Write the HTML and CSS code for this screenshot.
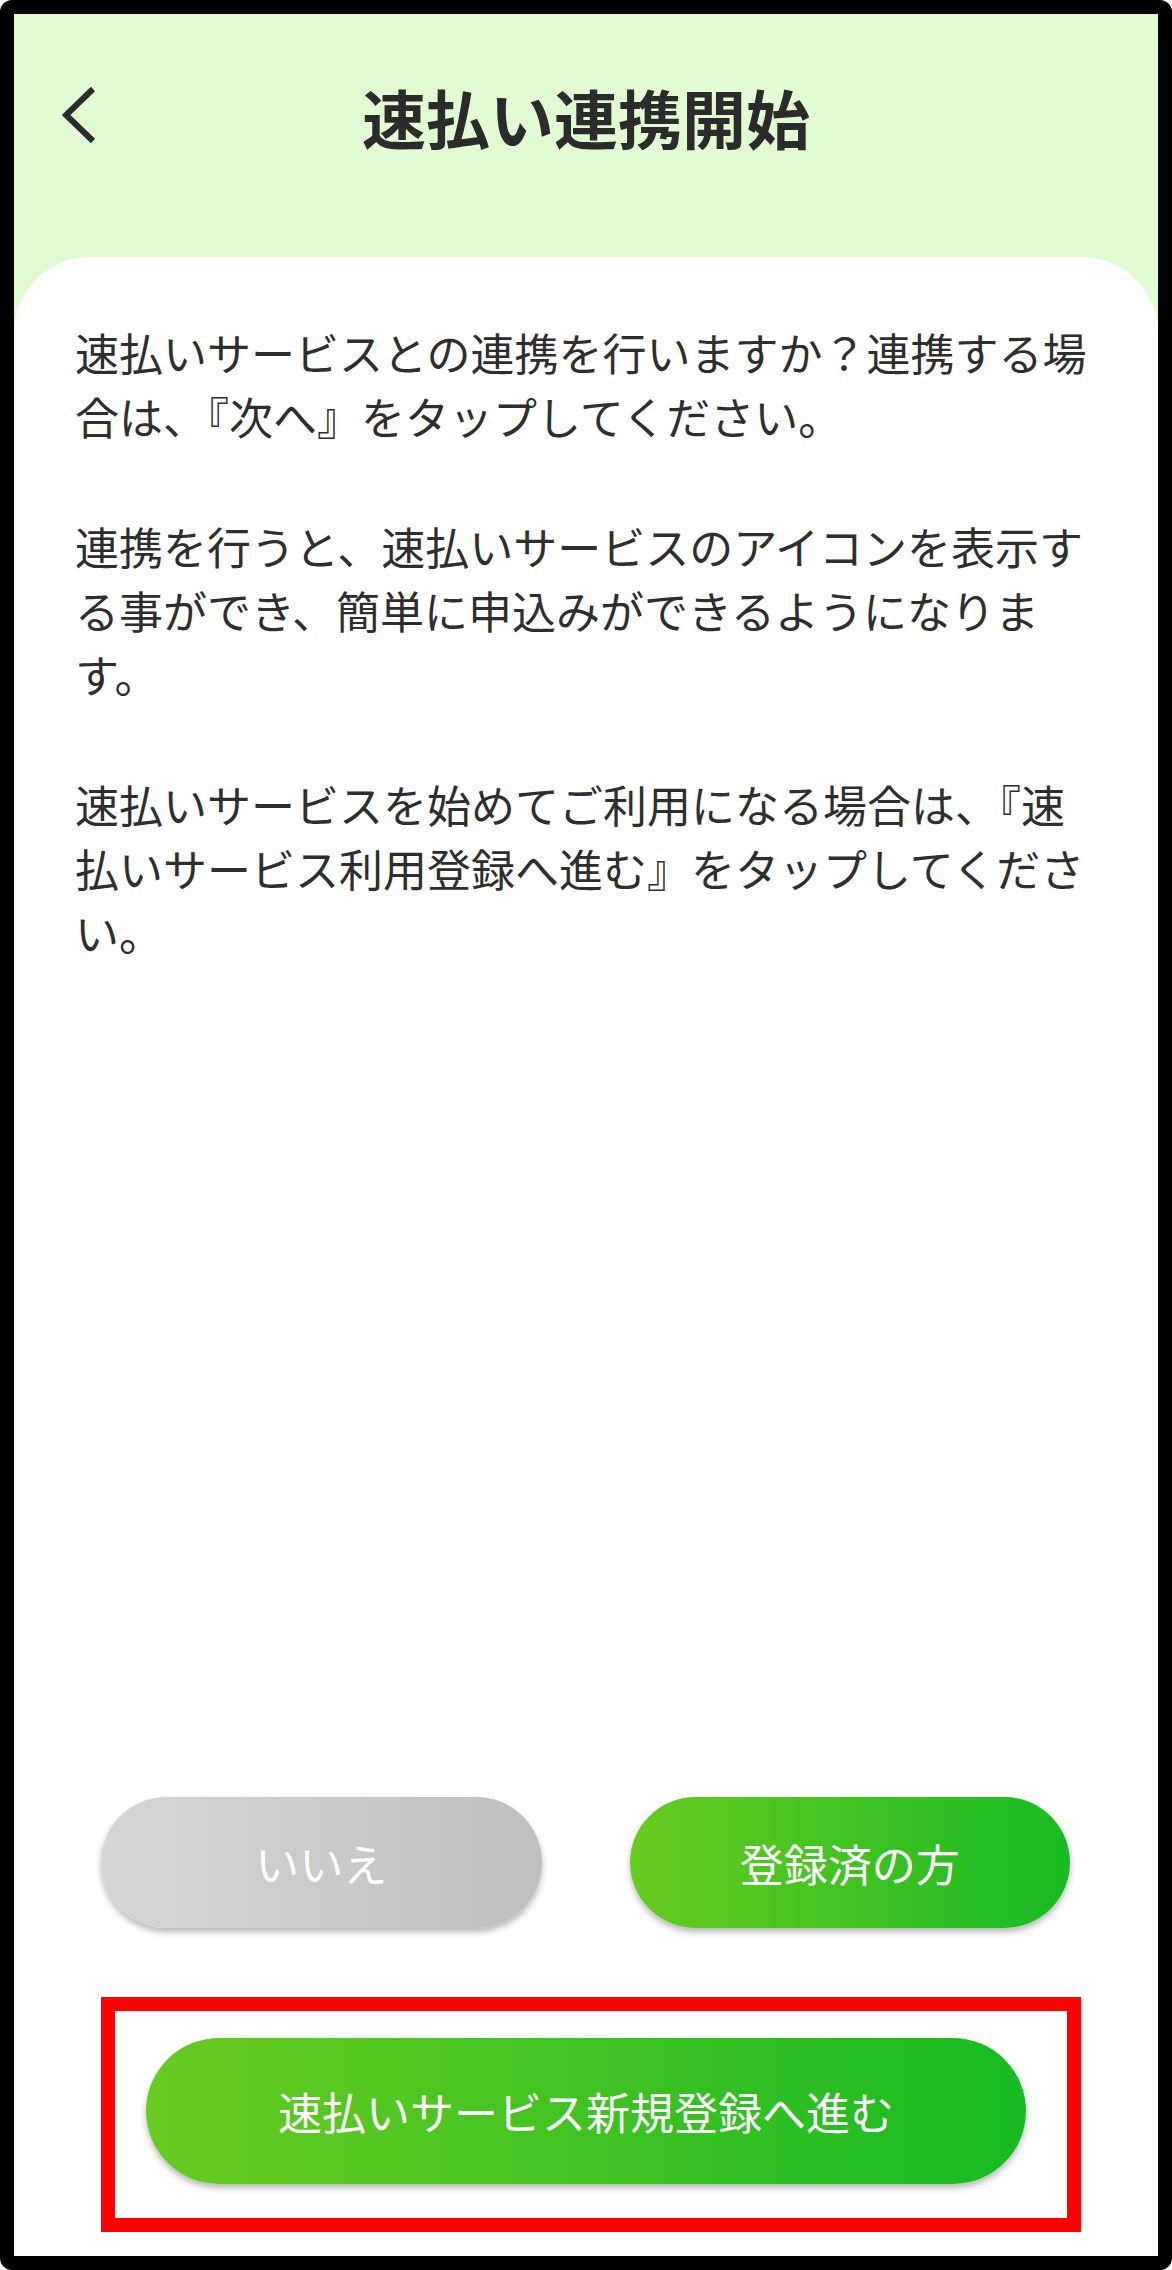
FILE: index.html
```html
<!DOCTYPE html>
<html lang="ja">
<head>
<meta charset="utf-8">
<title>速払い連携開始</title>
<link rel="stylesheet" href="styles.css">
</head>
<body>
<div class="frame">
  <header class="header">
    <div class="bar">
      <button class="back" aria-label="戻る">
        <svg width="34" height="58" viewBox="0 0 34 58"><polyline points="31,3 4,29 31,55" fill="none" stroke="#2b2b2b" stroke-width="6"/></svg>
      </button>
      <h1 class="title">速払い連携開始</h1>
      <span class="spacer"></span>
    </div>
  </header>
  <main class="card">
    <div class="text">
      <p>速払いサービスとの連携を行いますか？連携する場合は、『次へ』をタップしてください。</p>
      <p>連携を行うと、速払いサービスのアイコンを表示する事ができ、簡単に申込みができるようになります。</p>
      <p>速払いサービスを始めてご利用になる場合は、『速払いサービス利用登録へ進む』をタップしてください。</p>
    </div>
    <div class="actions">
      <div class="row">
        <button class="btn btn-gray">いいえ</button>
        <button class="btn btn-green">登録済の方</button>
      </div>
      <div class="highlight">
        <button class="btn btn-green btn-wide">速払いサービス新規登録へ進む</button>
      </div>
    </div>
  </main>
</div>
</body>
</html>
```
FILE: styles.css
```css
html, body {
  margin: 0;
  padding: 0;
  background: #ffffff;
}
body {
  font-family: "Noto Sans CJK JP", "Noto Sans", sans-serif;
}
.frame {
  width: 1172px;
  height: 2270px;
  box-sizing: border-box;
  border: 14px solid #000;
  border-radius: 12px;
  background: #e1fbd2;
  display: flex;
  flex-direction: column;
  overflow: hidden;
}
.header {
  height: 243px;
  flex: none;
}
.bar {
  display: grid;
  grid-template-columns: 1fr auto 1fr;
  align-items: center;
  padding: 62px 0 0 48px;
  height: 80px;
}
.back {
  background: none;
  border: 0;
  padding: 0;
  width: 34px;
  height: 58px;
  display: block;
  justify-self: start;
  margin-top: -3px;
}
.back svg {
  display: block;
}
.title {
  margin: 0 0 0 -48px;
  font-size: 64px;
  line-height: 80px;
  font-weight: 700;
  color: #2b2b2b;
  letter-spacing: 0;
}
.card {
  flex: 1;
  background: #ffffff;
  border-radius: 76px 76px 0 0;
  display: flex;
  flex-direction: column;
}
.text {
  padding: 63px 61px 0 61px;
}
.text p {
  margin: 0 0 66px 0;
  font-size: 44px;
  line-height: 64px;
  color: #2e2e2e;
}
.actions {
  margin-top: auto;
  padding-bottom: 24px;
}
.row {
  display: flex;
  gap: 88px;
  padding: 0 88px 0 87px;
}
.btn {
  border: 0;
  font-family: "Noto Sans CJK JP", "Noto Sans", sans-serif;
  font-size: 44px;
  font-weight: 400;
  color: #ffffff;
  height: 131px;
  border-radius: 80px;
  box-shadow: 0 4px 6px rgba(0, 0, 0, 0.28);
  padding: 0;
  display: flex;
  align-items: center;
  justify-content: center;
}
.row .btn {
  flex: 1;
}
.btn-gray {
  background: linear-gradient(to right, #d6d6d6, #bfbfbf);
}
.btn-green {
  background: linear-gradient(to right, #68cb20, #17bb22);
}
.highlight {
  margin: 69px 77px 0 87px;
  border: 14px solid #ff0000;
  padding: 27px 41px 34px 31px;
}
.btn-wide {
  width: 880px;
  height: 146px;
}
```
